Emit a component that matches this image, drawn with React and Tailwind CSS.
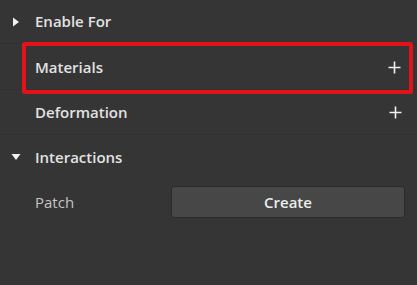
import React from 'react';

const Plus = () => (
  <svg width="13" height="13" viewBox="0 0 13 13" className="text-[#f0f0f0]">
    <path d="M6.5 0.5v12M0.5 6.5h12" stroke="currentColor" strokeWidth="1.6" />
  </svg>
);

const Right = () => (
  <svg width="8" height="10" viewBox="0 0 8 10" className="text-[#f2f2f2]">
    <path d="M1 0.5 L7 5 L1 9.5 Z" fill="currentColor" />
  </svg>
);

const Down = () => (
  <svg width="10" height="8" viewBox="0 0 10 8" className="text-[#f2f2f2]">
    <path d="M0.5 1 L9.5 1 L5 7 Z" fill="currentColor" />
  </svg>
);

const App = () => {
  return (
    <div
      className="w-[417px] h-[285px] bg-[#353535] overflow-hidden text-[15px]"
      style={{ fontFamily: '"Open Sans", "Noto Sans", sans-serif' }}
    >
      <div className="h-[44px] flex items-center border-b border-[#303030]">
        <div className="w-[35px] flex justify-center pr-[4px]">
          <Right />
        </div>
        <span className="font-semibold text-[#e2e2e2]">Enable For</span>
      </div>

      <div className="h-[46px] flex items-center border-b border-[#303030]">
        <div className="flex-1 h-[52px] mt-[2px] ml-[22px] mr-[4px] border-4 border-[#e3121a] rounded-[3px] flex items-center justify-between pl-[9px] pr-[8px]">
          <span className="font-semibold text-[#e2e2e2]">Materials</span>
          <Plus />
        </div>
      </div>

      <div className="h-[45px] flex items-center justify-between pl-[35px] pr-[15px] border-b border-[#303030]">
        <span className="font-semibold text-[#e2e2e2]">Deformation</span>
        <Plus />
      </div>

      <div className="h-[44px] flex items-center">
        <div className="w-[35px] flex justify-center pr-[4px]">
          <Down />
        </div>
        <span className="font-semibold text-[#e2e2e2]">Interactions</span>
      </div>

      <div className="h-[46px] flex items-center pl-[35px] pr-[12px]">
        <span className="w-[136px] text-[#c4c4c4]">Patch</span>
        <button className="flex-1 h-[32px] bg-[#474747] border border-[#2b2b2b] rounded-[3px] font-semibold text-[#ececec]">
          Create
        </button>
      </div>
    </div>
  );
};

export default App;
